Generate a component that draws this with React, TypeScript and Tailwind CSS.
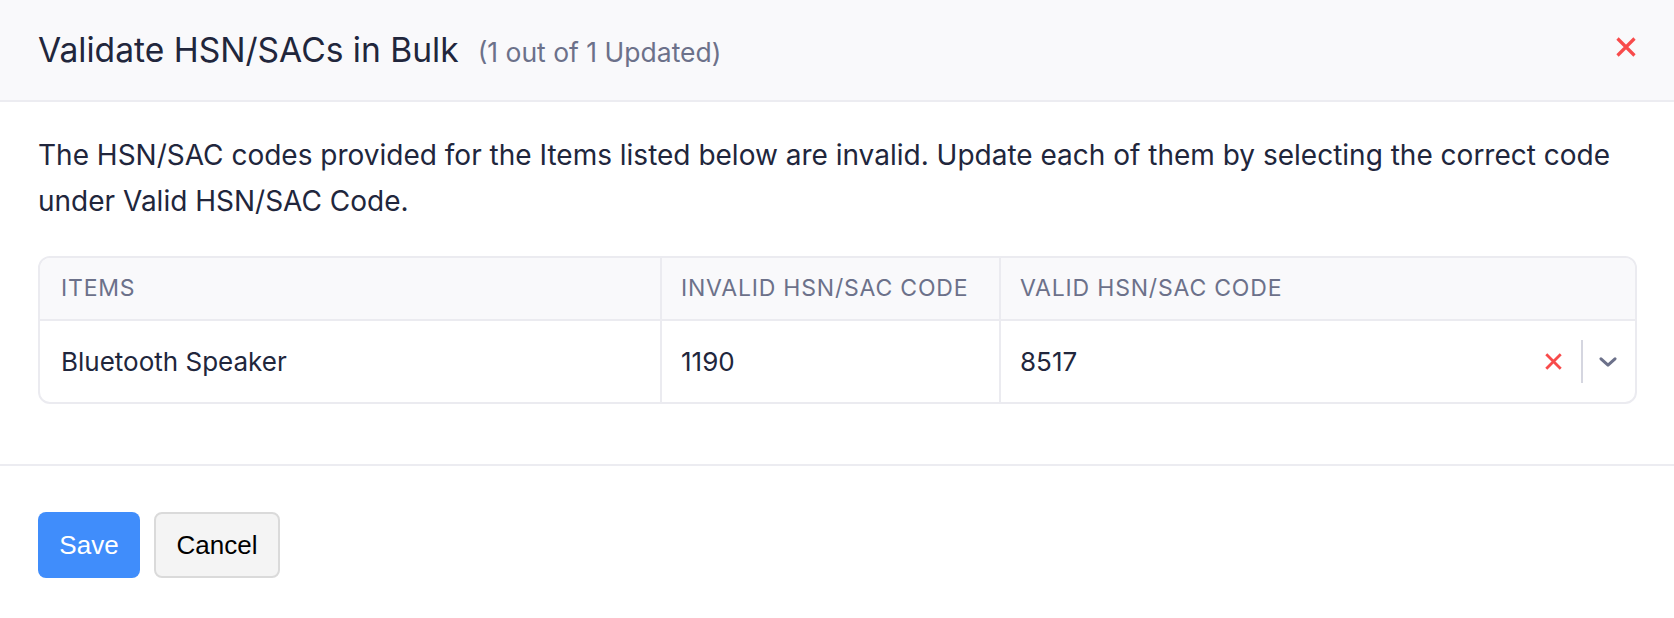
import { useState } from "react";

const inter = { fontFamily: "Inter, 'Noto Sans', sans-serif" };

function CrossIcon({ className, weight = 3 }: { className?: string; weight?: number }) {
  return (
    <svg viewBox="0 0 20 20" className={className} fill="none" stroke="currentColor" strokeWidth={weight}>
      <path d="M1.5 1.5L18.5 18.5M18.5 1.5L1.5 18.5" />
    </svg>
  );
}

function ChevronIcon({ className }: { className?: string }) {
  return (
    <svg viewBox="0 0 18 10" className={className} fill="none" stroke="currentColor" strokeWidth={3} strokeLinecap="round" strokeLinejoin="round">
      <path d="M2 1.8l7 6.4 7-6.4" />
    </svg>
  );
}

export default function App() {
  const [code, setCode] = useState("8517");

  return (
    <div className="min-h-[618px] w-full bg-white text-[#21263c]" style={inter}>
      <div className="flex h-[102px] items-center justify-between border-b-2 border-[#ececf1] bg-[#f9f9fb] px-[38px]">
        <div className="flex items-baseline gap-[19px]">
          <h1 className="text-[33.6px] font-normal leading-none">Validate HSN/SACs in Bulk</h1>
          <span className="text-[26.5px] leading-none text-[#6c718a]">(1 out of 1 Updated)</span>
        </div>
        <button className="mr-[0px] mt-[-6px] text-[#f84b4b]" aria-label="Close">
          <CrossIcon className="size-[20px]" weight={3.2} />
        </button>
      </div>

      <div className="px-[38px] pb-[60px] pt-[30px]">
        <p className="text-[28px] leading-[46px]">
          The HSN/SAC codes provided for the Items listed below are invalid. Update each of them by selecting the correct code under Valid HSN/SAC Code.
        </p>

        <div className="mt-[32px] mr-[-1px] overflow-hidden rounded-[12px] border-2 border-[#ebebf0]">
          <table className="w-full table-fixed border-collapse">
            <colgroup>
              <col className="w-[621px]" />
              <col className="w-[339px]" />
              <col />
            </colgroup>
            <thead>
              <tr className="h-[62px] bg-[#f9f9fb] text-left text-[23px] uppercase tracking-[0.035em] text-[#6c718a]">
                <th className="border-b-2 border-[#ebebf0] px-[21px] font-normal">Items</th>
                <th className="border-b-2 border-l-2 border-[#ebebf0] px-[19px] font-normal">Invalid HSN/SAC Code</th>
                <th className="border-b-2 border-l-2 border-[#ebebf0] px-[19px] font-normal">Valid HSN/SAC Code</th>
              </tr>
            </thead>
            <tbody>
              <tr className="h-[82px] text-[26px]">
                <td className="px-[21px]">Bluetooth Speaker</td>
                <td className="border-l-2 border-[#ebebf0] px-[19px]">1190</td>
                <td className="border-l-2 border-[#ebebf0] pl-[19px] pr-[18px]">
                  <div className="flex items-center">
                    <span className="flex-1">{code}</span>
                    <button className="text-[#f84b4b]" aria-label="Clear" onClick={() => setCode("")}>
                      <CrossIcon className="size-[17px]" weight={3.3} />
                    </button>
                    <span className="ml-[19px] mr-[16px] h-[43px] w-[2px] bg-[#d5d6e0]" />
                    <ChevronIcon className="h-[10px] w-[18px] text-[#6c718a]" />
                  </div>
                </td>
              </tr>
            </tbody>
          </table>
        </div>
      </div>

      <div className="flex gap-[14px] border-t-2 border-[#ececf1] px-[38px] pb-[40px] pt-[46px]" style={{ fontFamily: "'Liberation Sans', Arial, sans-serif" }}>
        <button className="h-[66px] w-[102px] rounded-[8px] bg-[#408dfb] text-[26px] text-white">Save</button>
        <button className="h-[66px] w-[126px] rounded-[8px] border-2 border-[#dadada] bg-[#f4f4f4] text-[26px] text-black">Cancel</button>
      </div>
    </div>
  );
}
